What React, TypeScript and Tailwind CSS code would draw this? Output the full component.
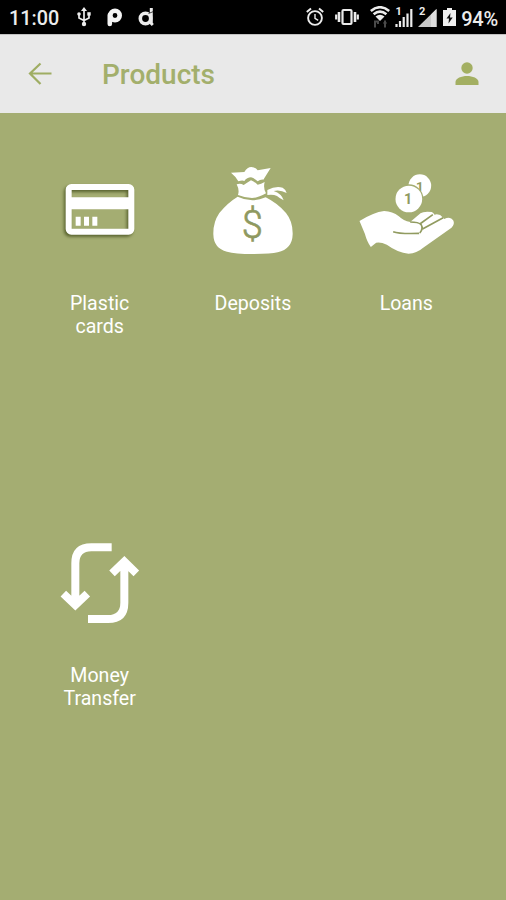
import type { ReactNode } from 'react';

interface ProductTileProps {
  label: string;
  children: ReactNode;
}

function ProductTile({ label, children }: ProductTileProps) {
  return (
    <div className="flex h-[372px] flex-col items-center">
      {/* All product drawings share one 300x330 canvas */}
      <svg viewBox="0 0 300 330" className="h-[110px] w-[100px] shrink-0 overflow-visible" fill="none">
        {children}
      </svg>
      <p className="mt-[27px] w-24 text-center text-[19.6px] leading-[23px] text-white">{label}</p>
    </div>
  );
}

function StatusBar() {
  return (
    <div className="flex h-[34px] items-center justify-between bg-black pl-[9px] pr-2 text-[20px] font-medium leading-none text-[#ececec]">
      <div className="flex items-center">
        <span className="w-[68px] pt-1 text-[19.8px]">11:00</span>
        {/* USB */}
        <svg viewBox="0 0 14 20" className="mr-4 h-5 w-3.5" fill="none" stroke="#ececec" strokeWidth="1.7">
          <path d="M7 3v13M2 7v4l5 2.500 5-2.500V7" />
          <path d="M7 0l3 4H4z" fill="#ececec" stroke="none" />
          <circle cx="7" cy="17" r="2.2" fill="#ececec" stroke="none" />
          <circle cx="2" cy="7" r="1.8" fill="#ececec" stroke="none" />
          <path d="M10.3 5.2h3.4v3.4h-3.4z" fill="#ececec" stroke="none" />
        </svg>
        {/* Notification logos */}
        <svg viewBox="0 0 15 20" className="mr-4 h-5 w-[15px]" fill="none" stroke="#f4f4f4">
          <circle cx="8" cy="8.500" r="4.700" strokeWidth="4.600" />
          <path d="M2.800 8v9" strokeWidth="4.600" strokeLinecap="round" />
        </svg>
        <svg viewBox="0 0 16 20" className="h-5 w-4" fill="none" stroke="#ececec">
          <circle cx="7.500" cy="11.500" r="5.200" strokeWidth="3.600" />
          <path d="M13.300 1v15.500l1.500 1.500" strokeWidth="3" />
          <path d="M10.500 6.500l5-2" stroke="#000" strokeWidth="0.7" />
        </svg>
      </div>

      <div className="flex items-center">
        {/* Alarm */}
        <svg viewBox="0 0 18 20" className="mr-[11px] h-5 w-[18px]" fill="none" stroke="#ececec">
          <circle cx="9" cy="11" r="6.9" strokeWidth="1.9" />
          <path d="M9 7v4.3l3.2 2" strokeWidth="1.4" />
          <path d="M.8 5l4.2-3.5M17.2 5L13 1.500" strokeWidth="2" />
        </svg>
        {/* Vibrate */}
        <svg viewBox="0 0 24 20" className="mr-[11px] h-5 w-6" fill="none" stroke="#ececec" strokeWidth="2.2">
          <rect x="7.500" y="3" width="9" height="14" rx="1" />
          <path d="M4 5v10M20 5v10" strokeWidth="2.6" />
          <path d="M1.200 7.500v5M22.800 7.500v5" />
        </svg>
        {/* Wi-Fi with traffic marks */}
        <svg viewBox="0 0 20 22" className="mr-[5px] h-[22px] w-5" fill="none" stroke="#ececec" strokeWidth="2.600">
          <path d="M.8 5Q10-2.500 19.200 5M3.600 8.300Q10 2.800 16.400 8.300" />
          <path d="M5.500 10.500Q10 7 14.500 10.500L10 15z" fill="#ececec" stroke="none" />
          <path d="M5 21.500v-7M4 15.500h4v2.500M15 21.500v-7M13.500 17h3" stroke="#4a4a4a" strokeWidth="2" />
        </svg>
        {/* SIM 1 */}
        <svg viewBox="0 0 18 22" className="mr-[5px] h-[22px] w-[18px] overflow-visible" fill="none" stroke="#ececec" strokeWidth="2.200">
          <path d="M1.500 21v-3M5 21v-6M8.700 21v-10M12.500 21V7.500M16.300 21V3" />
          <text x="0.500" y="9" fontSize="11" fontWeight="700" fill="#ececec" stroke="none">1</text>
        </svg>
        {/* SIM 2 */}
        <svg viewBox="0 0 19 22" className="mr-[6px] h-[22px] w-[19px] overflow-visible">
          <path d="M0 21L18.500 3V21z" fill="#c9c9c9" />
          <path d="M13 8.500L18.500 3V21H13z" fill="#dedede" />
          <text x="1" y="9" fontSize="11" fontWeight="700" fill="#ececec">2</text>
        </svg>
        {/* Battery */}
        <svg viewBox="0 0 13 20" className="mr-[5px] h-5 w-[13px]">
          <path d="M4 1h5v2h4v16H0V3h4z" fill="#f0f0f0" />
          <path d="M7.500 6L3.500 11.500h2.500L5.500 16.500l4.200-6H7z" fill="#111" />
        </svg>
        <span className="pt-1 tracking-[-0.2px]">94%</span>
      </div>
    </div>
  );
}

function Header() {
  return (
    <header className="flex h-[79px] items-center border-t border-[#c2c2c2] bg-[#e9e9e9] pl-7 pr-[27px]">
      <svg viewBox="0 0 24 24" className="h-6 w-6" fill="none" stroke="#9fad63" strokeWidth="2.2">
        <path d="M23.500 11.500H2M12.500 1.500L2 11.500l10.500 10.500" />
      </svg>
      <h1 className="ml-[50px] flex-1 pt-0.5 text-[28px] font-medium leading-8 text-[#a3af6c]">Products</h1>
      <svg viewBox="0 0 24 24" className="h-6 w-6" fill="#a3af62">
        <circle cx="12" cy="6" r="5.700" />
        <path d="M.5 23v-3c0-3.800 6-6 11.500-6s11.500 2.200 11.500 6v3z" />
      </svg>
    </header>
  );
}

export default function App() {
  return (
    <div className="flex h-[900px] w-full flex-col overflow-hidden bg-[#a4ad72] font-[Roboto,sans-serif]">
      <StatusBar />
      <Header />

      <main className="grid grid-cols-3 px-[23px] pt-[42px]">
        <ProductTile label="Plastic cards">
          <g transform="translate(0 45)">
            <rect
              x="56"
              y="51"
              width="188"
              height="134"
              rx="8"
              stroke="#fff"
              strokeWidth="18"
              className="drop-shadow-[-5px_6px_4px_#59632f]"
            />
            <path d="M50 82h200v36H50z" fill="#fff" />
            <path d="M77 140h15v27H77zM102 140h15v27h-15zM127 140h15v27h-15z" fill="#fff" />
          </g>
        </ProductTile>

        <ProductTile label="Deposits">
          <g fill="#fff">
            <path d="M84 53L124 51Q133 36 145 36Q157 36 164 46L203 39L181 74Q172 73 164 79Q152 68 144 67Q132 67 124 78Q118 75 106 79Q98 64 84 53Z" />
            <path d="M101 88Q112 84 122 90Q133 83 144 76Q154 80 164 89Q174 87 185 81Q180 99 189 115Q165 129 147 129Q128 129 105 120Q110 105 101 88Z" />
            <path d="M104 125Q145 145 188 127Q224 145 249 174Q270 200 269 238Q268 282 224 292Q204 297 150 297Q96 297 72 290Q32 281 31 238Q30 202 49 174Q74 143 104 125Z" />
            <path d="M193 105Q218 92 239 98Q247 102 251 114Q231 103 212 108Q236 116 242 136Q230 130 222 123Q210 117 193 120Z" />
          </g>
          <text x="148" y="249" textAnchor="middle" fontSize="114" fontWeight="300" fill="#8f9960" stroke="#8f9960" strokeWidth="2">$</text>
        </ProductTile>

        <ProductTile label="Loans">
          <g transform="translate(-19.5 30)">
            <circle cx="211" cy="62" r="34" fill="#fff" />
            <text x="211" y="77" textAnchor="middle" fontSize="39" fontWeight="700" fill="#8f9960">1</text>
            <circle cx="178" cy="102" r="44" fill="#a4ad72" />
            <circle cx="178" cy="102" r="40" fill="#fff" />
            <text x="176" y="117" textAnchor="middle" fontSize="43" fontWeight="700" fill="#8f9960">1</text>
            <path
              d="M30 168Q72 142 104 138Q129 139 148 154Q162 168 182 171L213 145Q222 138 247 141Q253 144 255 149Q270 145 281 158L284 162Q303 153 311 166Q317 177 306 188L220 249Q202 265 177 266Q145 263 112 239Q93 230 80 233L64 246Q53 231 46 206Z"
              fill="#fff"
            />
            <path
              d="M131 200Q149 207 209 205M182 171Q207 171 215 179Q222 191 211 204M211 177L250 149M219 192L281 158"
              stroke="#919b60"
              strokeWidth="5"
            />
          </g>
        </ProductTile>

        <ProductTile label="Money Transfer">
          <g transform="translate(0 9)" stroke="#fff" strokeWidth="24">
            <path d="M185 52H124Q76 52 76 100V221M40 191L76 225L112 191" />
            <path d="M114 267H174Q223 267 223 218V98M186 130L223 95L259 130" />
          </g>
        </ProductTile>
      </main>
    </div>
  );
}
